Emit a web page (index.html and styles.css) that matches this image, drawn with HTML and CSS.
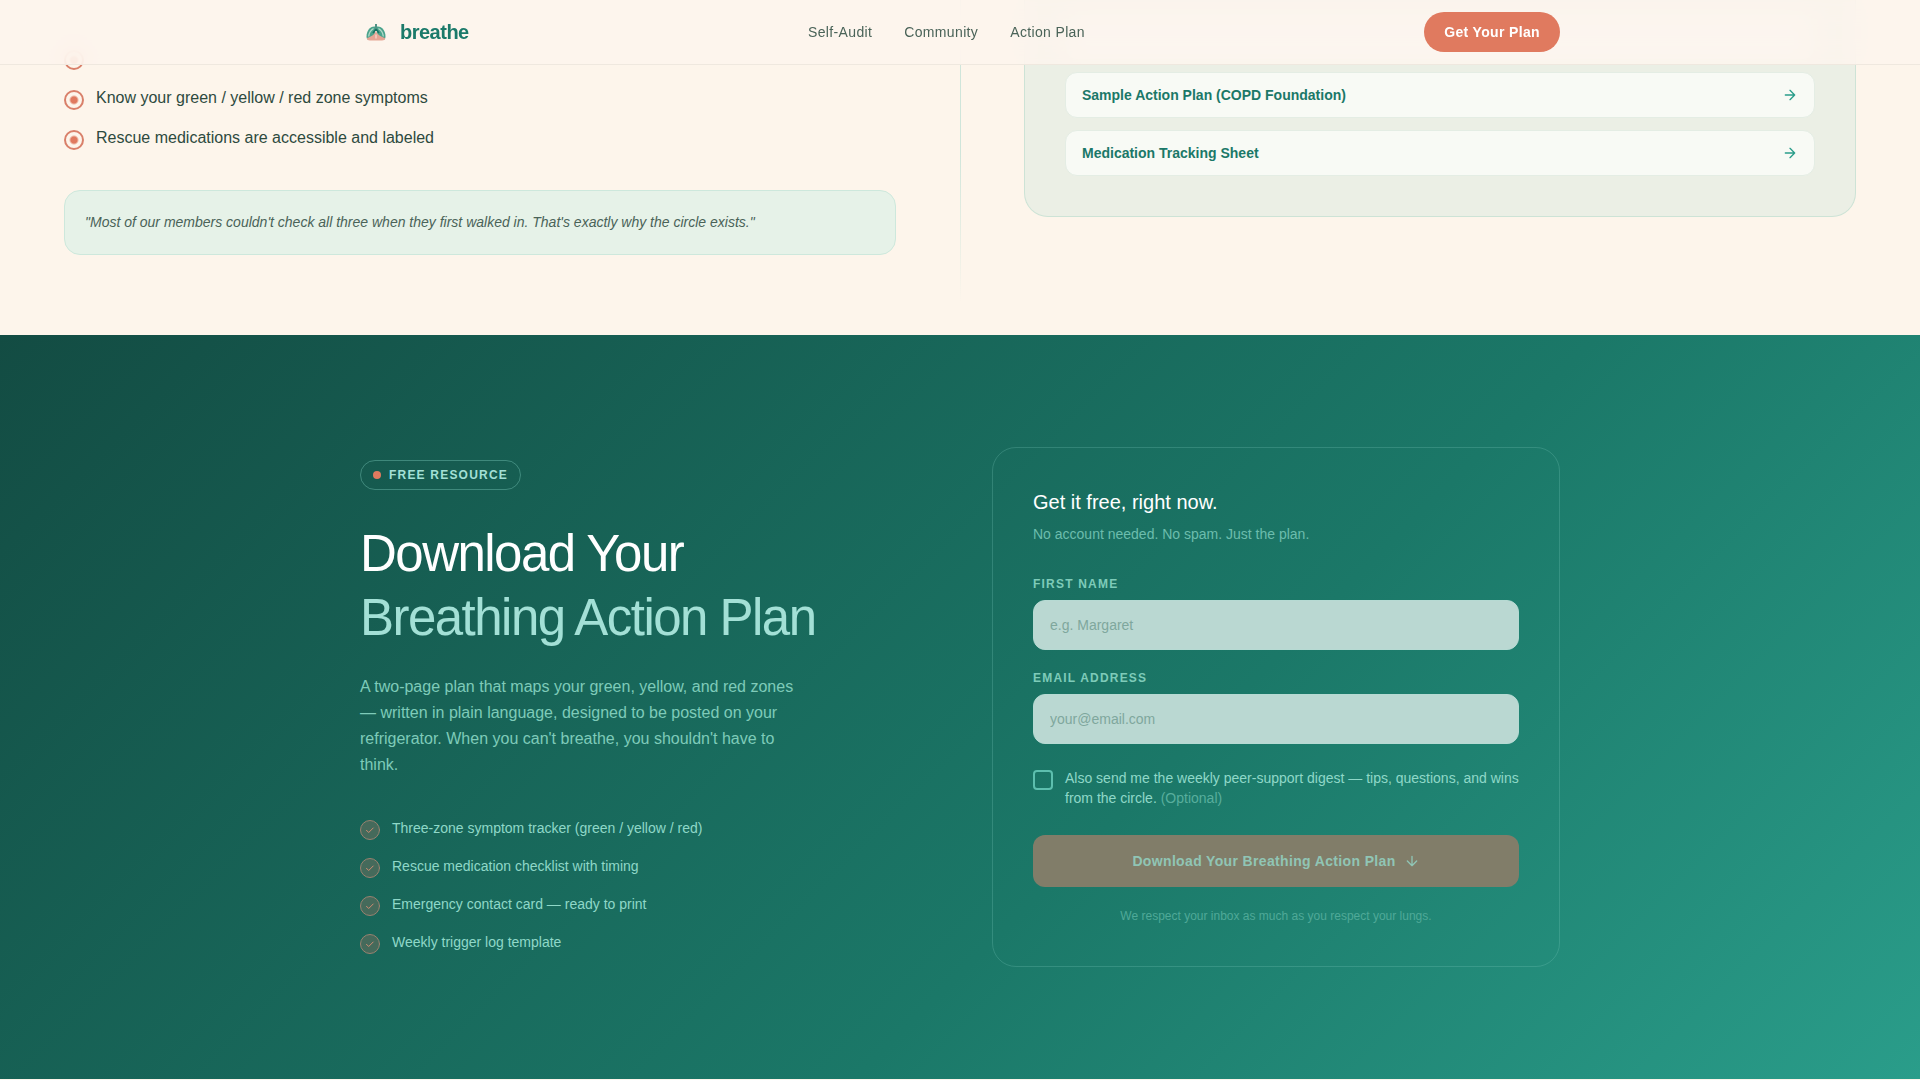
FILE: index.html
```html
<!DOCTYPE html>
<html lang="en">
<head>
  <meta charset="UTF-8" />
  <meta name="viewport" content="width=device-width, initial-scale=1.0" />
  <title>breathe</title>
  <link rel="stylesheet" href="styles.css">
</head>
<body>
  <!-- Fixed Header -->
  <header class="site-header">
    <div class="container header-inner">
      <a href="#" class="brand">
        <svg class="brand-icon" viewBox="0 0 32 32" aria-hidden="true">
          <path d="M15 10.500c-5-.500-8.500 4.500-8.500 10 0 2.500 1 3.500 3 3.500 3 0 5-3 5.500-7z" fill="#4aa38c"/>
          <path d="M17 10.500c5-.500 8.500 4.500 8.500 10 0 2.500-1 3.500-3 3.500-3 0-5-3-5.500-7z" fill="#4aa38c"/>
          <path d="M13.500 12.500c-2.500 1.500-4.500 4.500-4.800 8" fill="none" stroke="#b4dac9" stroke-width="1.300"/>
          <path d="M18.500 12.500c2.500 1.500 4.500 4.500 4.800 8" fill="none" stroke="#b4dac9" stroke-width="1.300"/>
          <path d="M16 14.500c-1 4-4.500 6-9 7.500 0 1.800 1 2.500 3 2.500h12c2 0 3-.700 3-2.500-4.500-1.500-8-3.500-9-7.500z" fill="#e6a594"/>
          <path d="M16 18.500v4" stroke="#f6d3c6" stroke-width="1.500"/>
          <path d="M16 8v7M16 13l-3 4M16 13l3 4" fill="none" stroke="#1b7263" stroke-width="1.500"/>
        </svg>
        <span>breathe</span>
      </a>
      <nav>
        <ul class="nav-list">
          <li><a href="#audit">Self-Audit</a></li>
          <li><a href="#community">Community</a></li>
          <li><a href="#plan">Action Plan</a></li>
        </ul>
      </nav>
      <a href="#plan" class="header-cta">Get Your Plan</a>
    </div>
  </header>

  <!-- Self audit and tools -->
  <section class="audit" id="audit">
    <div class="audit-col">
      <ul class="audit-list">
        <li><span class="dot"></span></li>
        <li><span class="dot"></span>Know your green / yellow / red zone symptoms</li>
        <li><span class="dot"></span>Rescue medications are accessible and labeled</li>
      </ul>
      <blockquote class="quote">"Most of our members couldn't check all three when they first walked in. That's exactly why the circle exists."</blockquote>
    </div>
    <div class="audit-divider"></div>
    <div class="audit-col">
      <div class="tools">
        <div class="tool-link"></div>
        <a href="#" class="tool-link">
          Sample Action Plan (COPD Foundation)
          <svg class="icon" viewBox="0 0 24 24"><path d="M5 12h14M12 5l7 7-7 7"/></svg>
        </a>
        <a href="#" class="tool-link">
          Medication Tracking Sheet
          <svg class="icon" viewBox="0 0 24 24"><path d="M5 12h14M12 5l7 7-7 7"/></svg>
        </a>
      </div>
    </div>
  </section>

  <!-- Download section -->
  <section class="download" id="plan">
    <div class="container download-grid">
      <div class="download-text">
        <span class="badge"><span class="badge-dot"></span>FREE RESOURCE</span>
        <h2>Download Your<br><span class="mint">Breathing Action Plan</span></h2>
        <p class="lead">A two-page plan that maps your green, yellow, and red zones — written in plain language, designed to be posted on your refrigerator. When you can't breathe, you shouldn't have to think.</p>
        <ul class="features">
          <li><svg class="check" viewBox="0 0 20 20"><circle cx="10" cy="10" r="9.500"/><path d="M6.500 10.300l2.200 2.200 4.500-4.500"/></svg>Three-zone symptom tracker (green / yellow / red)</li>
          <li><svg class="check" viewBox="0 0 20 20"><circle cx="10" cy="10" r="9.500"/><path d="M6.500 10.300l2.200 2.200 4.500-4.500"/></svg>Rescue medication checklist with timing</li>
          <li><svg class="check" viewBox="0 0 20 20"><circle cx="10" cy="10" r="9.500"/><path d="M6.500 10.300l2.200 2.200 4.500-4.500"/></svg>Emergency contact card — ready to print</li>
          <li><svg class="check" viewBox="0 0 20 20"><circle cx="10" cy="10" r="9.500"/><path d="M6.500 10.300l2.200 2.200 4.500-4.500"/></svg>Weekly trigger log template</li>
        </ul>
      </div>

      <form class="card">
        <h3>Get it free, right now.</h3>
        <p class="card-sub">No account needed. No spam. Just the plan.</p>
        <div class="field">
          <label for="firstName">FIRST NAME</label>
          <input type="text" id="firstName" placeholder="e.g. Margaret">
        </div>
        <div class="field">
          <label for="email">EMAIL ADDRESS</label>
          <input type="email" id="email" placeholder="your@email.com">
        </div>
        <div class="optin">
          <input type="checkbox" id="digest">
          <label for="digest">Also send me the weekly peer-support digest — tips, questions, and wins from the circle. <span class="optional">(Optional)</span></label>
        </div>
        <button type="submit" class="submit" disabled>
          Download Your Breathing Action Plan
          <svg class="icon" viewBox="0 0 24 24"><path d="M12 5v14M5 12l7 7 7-7"/></svg>
        </button>
        <p class="note">We respect your inbox as much as you respect your lungs.</p>
      </form>
    </div>
  </section>
</body>
</html>
```
FILE: styles.css
```css
:root {
  --teal-dark: #134c43;
  --teal: #1b7868;
  --teal-light: #2a9d8a;
  --mint: #a3e0d6;
  --coral: #e07a5f;
  --cream: #fdf5eb;
}
* {
  box-sizing: border-box;
  margin: 0;
  padding: 0;
}
body {
  font-family: "Liberation Sans", Arial, sans-serif;
  background-color: var(--cream);
  color: #2d4a3e;
}
ul {
  list-style: none;
}
a {
  text-decoration: none;
}
.container {
  max-width: 1200px;
  margin: 0 auto;
}
.icon {
  width: 16px;
  height: 16px;
  flex-shrink: 0;
  fill: none;
  stroke: currentColor;
  stroke-width: 2;
  stroke-linecap: round;
  stroke-linejoin: round;
}

/* Header */
.site-header {
  position: fixed;
  top: 0;
  left: 0;
  width: 100%;
  z-index: 10;
  background-color: rgba(253, 245, 237, 0.85);
  backdrop-filter: blur(12px);
  border-bottom: 1px solid #efe8df;
}
.header-inner {
  height: 64px;
  display: flex;
  justify-content: space-between;
  align-items: center;
}
.brand {
  display: flex;
  align-items: center;
  gap: 8px;
  font-size: 20px;
  font-weight: bold;
  letter-spacing: -0.025em;
  color: #1b7a6a;
}
.brand-icon {
  width: 32px;
  height: 32px;
}
.nav-list {
  display: flex;
  gap: 32px;
}
.nav-list a {
  font-size: 14px;
  letter-spacing: 0.025em;
  color: #4a6358;
}
.header-cta {
  padding: 10px 20px;
  border-radius: 20px;
  background-color: var(--coral);
  color: #fff;
  font-size: 14px;
  line-height: 20px;
  font-weight: bold;
  letter-spacing: 0.025em;
}

/* Self audit */
.audit {
  display: flex;
  padding-bottom: 80px;
}
.audit-col {
  flex: 1;
  padding: 0 64px;
}
.audit-divider {
  width: 1px;
  margin: 0 -1px -48px 0;
  background: linear-gradient(to bottom, #cfe5da 50%, transparent);
}
.audit-list {
  display: flex;
  flex-direction: column;
  gap: 16px;
  padding-top: 46px;
}
.audit-list li {
  display: flex;
  gap: 12px;
  min-height: 24px;
  font-size: 16px;
  line-height: 24px;
}
.dot {
  width: 20px;
  height: 20px;
  margin-top: 4px;
  border: 2px solid #d9806a;
  border-radius: 50%;
  background: radial-gradient(circle, var(--coral) 3px, transparent 5px);
}
.quote {
  margin-top: 40px;
  padding: 20px;
  border: 1px solid #cde8dc;
  border-radius: 16px;
  background-color: #e6f2e8;
  color: #4a6358;
  font-size: 14px;
  line-height: 23px;
  font-style: italic;
}
.tools {
  display: flex;
  flex-direction: column;
  gap: 12px;
  padding: 14px 40px 40px;
  border: 1px solid #cde3d6;
  border-top: none;
  border-radius: 0 0 24px 24px;
  background-color: #ebefe5;
}
.tool-link {
  display: flex;
  justify-content: space-between;
  align-items: center;
  min-height: 46px;
  padding: 12px 16px;
  border: 1px solid #e4ede4;
  border-radius: 12px;
  background-color: #f8faf5;
  color: var(--teal);
  font-size: 14px;
  line-height: 20px;
  font-weight: bold;
}
.tool-link .icon {
  color: var(--teal-light);
}

/* Download */
.download {
  padding: 112px 0;
  background: linear-gradient(135deg, var(--teal-dark) 0%, var(--teal) 60%, var(--teal-light) 100%);
}
.download-grid {
  display: grid;
  grid-template-columns: 1fr 1fr;
  gap: 64px;
  align-items: center;
}
.badge {
  display: inline-flex;
  align-items: center;
  gap: 8px;
  padding: 6px 12px;
  border: 1px solid rgba(126, 205, 190, 0.4);
  border-radius: 16px;
  color: var(--mint);
  font-size: 12px;
  line-height: 16px;
  font-weight: bold;
  letter-spacing: 0.1em;
  vertical-align: top;
}
.badge-dot {
  width: 8px;
  height: 8px;
  border-radius: 50%;
  background-color: var(--coral);
}
h2 {
  margin-top: 32px;
  color: #fff;
  font-size: 51px;
  line-height: 64px;
  font-weight: normal;
  letter-spacing: -0.03em;
}
.mint {
  color: var(--mint);
}
.lead {
  max-width: 448px;
  margin-top: 24px;
  color: #7ecbb9;
  font-size: 16px;
  line-height: 26px;
}
.features {
  display: flex;
  flex-direction: column;
  gap: 16px;
  margin-top: 40px;
}
.features li {
  display: flex;
  gap: 12px;
  color: #8fd8c8;
  font-size: 14px;
  line-height: 20px;
}
.check {
  width: 20px;
  height: 20px;
  margin-top: 2px;
  fill: none;
  stroke-linecap: round;
  stroke-linejoin: round;
}
.check circle {
  fill: #456a5b;
  stroke: #9a8270;
}
.check path {
  stroke: #cf8c72;
}
.card {
  padding: 40px;
  border: 1px solid rgba(126, 205, 190, 0.25);
  border-radius: 24px;
}
h3 {
  color: #fff;
  font-size: 20px;
  line-height: 28px;
  font-weight: normal;
}
.card-sub {
  margin: 8px 0 32px;
  color: #6cbdad;
  font-size: 14px;
  line-height: 20px;
}
.field {
  display: flex;
  flex-direction: column;
  gap: 8px;
  margin-bottom: 20px;
}
.field label {
  color: #7ecbb9;
  font-size: 12px;
  line-height: 16px;
  font-weight: bold;
  letter-spacing: 0.1em;
}
.field input {
  height: 50px;
  padding: 0 16px;
  border: 1px solid #b6dad3;
  border-radius: 12px;
  background-color: #bad8d2;
  color: #2d4a3e;
  font-family: inherit;
  font-size: 14px;
}
.field input::placeholder {
  color: #7fa79d;
}
.optin {
  display: flex;
  gap: 12px;
  margin: 24px 0 27px;
  color: #8fd8c8;
  font-size: 14px;
  line-height: 20px;
}
.optin input {
  appearance: none;
  width: 20px;
  height: 20px;
  margin-top: 2px;
  flex-shrink: 0;
  border: 2px solid #5dbfae;
  border-radius: 4px;
}
.optional {
  color: #58ae9d;
}
.submit {
  display: flex;
  justify-content: center;
  align-items: center;
  gap: 8px;
  width: 100%;
  height: 52px;
  border: none;
  border-radius: 12px;
  background-color: #817d69;
  color: #90c5b5;
  font-family: inherit;
  font-size: 14px;
  font-weight: bold;
  letter-spacing: 0.025em;
}
.note {
  margin-top: 20px;
  color: #4fa998;
  font-size: 12px;
  line-height: 19px;
  text-align: center;
}
```
